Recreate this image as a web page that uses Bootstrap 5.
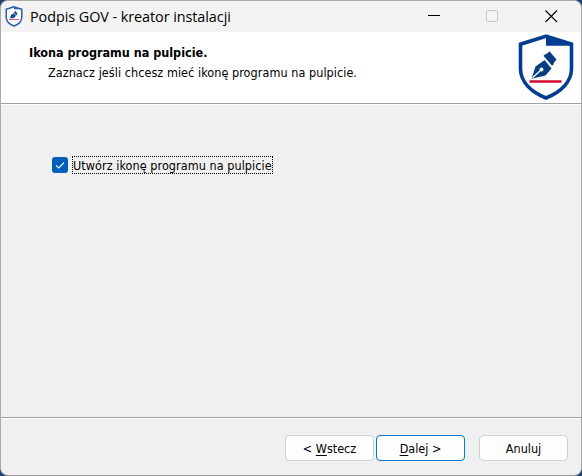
<!DOCTYPE html>
<html lang="pl">
<head>
<meta charset="utf-8">
<title>Podpis GOV - kreator instalacji</title>
<link href="https://cdn.jsdelivr.net/npm/bootstrap@5.3.0/dist/css/bootstrap.min.css" rel="stylesheet">
<style>
html, body { height: 100%; margin: 0; overflow: hidden; }
body { background: #1c3f78; font-family: "DejaVu Sans Condensed", "DejaVu Sans", sans-serif; font-stretch: condensed; font-size: 12.5px; line-height: 16px; color: #000; }
.wizard { width: 582px; height: 476px; background: #f0f0f0; border: 1px solid #aaa; border-bottom-color: #999; border-radius: 8px; overflow: hidden; }
.titlebar { height: 31px; background: #f3f3f3; padding-left: 4px; }
.titlebar-text { font-family: "Open Sans", "Noto Sans", sans-serif; font-stretch: normal; font-size: 14.4px; line-height: 20px; margin-left: 7px; letter-spacing: -.06px; }
.win-control { width: 58px; height: 31px; }
.wizard-head { height: 71px; background: #fff; padding: 13px 6px 0 28px; }
.wizard-title { font-weight: 700; }
.wizard-subtitle { padding-left: 19px; margin-top: 4px; letter-spacing: .06px; }
.emblem { margin-top: -12px; }
.rule { height: 2px; background: #a0a0a0; border-bottom: 1px solid #fff; }
.wizard-body { padding: 51px 0 0 51px; }
.option-box { width: 16px; height: 16px; border-radius: 3px; background: #005fb8; }
.option-text { border: 1px dotted #000; height: 18px; width: 201px; line-height: 17px; margin-left: 4px; white-space: nowrap; letter-spacing: .06px; }
.wizard-foot { height: 56px; padding: 16px 13px 0 0; }
.btn-wizard { width: 89px; height: 26px; padding: 0; font-size: 12.5px; line-height: 26px; border-radius: 4px; background: #fdfdfd; border: 1px solid #d0d0d0; color: #000; }
.btn-wizard.is-default { border-color: #0078d4; margin-left: 2px; }
.btn-wizard u { text-underline-offset: 2px; text-decoration-thickness: 1px; }
.cancel { margin-left: 14px; }
</style>
</head>
<body>
<svg class="d-none">
  <symbol id="shield" viewBox="0 0 58 68">
    <path d="M29 3.200 L3.500 11 V35 C3.500 48 14 58 29 64 C44 58 54.500 48 54.500 35 V11 Z" fill="#fff" stroke="#023d91" stroke-width="3.600"/>
    <path d="M29 2 L55 10 V12.500 H29 Z" fill="#023d91"/>
    <path d="M14.500 45 L18.500 33 L27.500 26.500 L34.500 35 L28.500 42 Z" fill="#083d82"/>
    <path d="M15.500 44 L23.500 37" stroke="#fff" stroke-width="1.300"/>
    <circle cx="24.500" cy="36" r="2" fill="#fff"/>
    <path d="M28 22 L32.500 18 L39.500 26 L35.500 31 Z" fill="#083d82"/>
    <path d="M27.500 21.500 L36 31.500" stroke="#083d82" stroke-width="2.600"/>
    <path d="M12.500 47.800 H44.500" stroke="#d20a2e" stroke-width="2.600"/>
  </symbol>
</svg>
<main class="wizard d-flex flex-column">
  <header class="titlebar d-flex align-items-center flex-shrink-0">
    <svg width="18" height="22" viewBox="0 0 18 22" fill="none">
      <path d="M9 .8 L1.200 3.300 V11 C1.200 15.500 4.500 18.500 9 20 C13.500 18.500 16.800 15.500 16.800 11 V3.300 Z" fill="#fafcff" stroke="#285fa8" stroke-width="1.500"/>
      <path d="M9 1 L16.500 3.300 H9 Z" fill="#285fa8"/>
      <path d="M5 12.500 L6 9 L8.500 7.200 L11 9.700 L9 11.900 Z" fill="#164985"/>
      <path d="M8.800 6.500 L10.500 5 L12.500 7.700 L11.200 9.500 Z" fill="#164985"/>
      <path d="M4 13.500 H14" stroke="#df6272"/>
    </svg>
    <span class="titlebar-text text-nowrap">Podpis GOV - kreator instalacji</span>
    <div class="d-flex ms-auto">
      <svg class="win-control" viewBox="0 0 58 31"><path d="M21 14.500 H33" stroke="#000"/></svg>
      <svg class="win-control" viewBox="0 0 58 31"><rect x="21.500" y="9.500" width="11" height="11" rx="1" fill="none" stroke="#c4c4c4"/></svg>
      <svg class="win-control" viewBox="0 0 58 31"><path d="M22.500 9.500 L34 21 M34 9.500 L22.500 21" stroke="#000" stroke-width="1.100"/></svg>
    </div>
  </header>
  <section class="wizard-head d-flex justify-content-between flex-shrink-0">
    <div class="text-nowrap">
      <div class="wizard-title">Ikona programu na pulpicie.</div>
      <div class="wizard-subtitle">Zaznacz jeśli chcesz mieć ikonę programu na pulpicie.</div>
    </div>
    <svg class="emblem flex-shrink-0" width="58" height="69" viewBox="0 0 58 68" preserveAspectRatio="none"><use href="#shield"/></svg>
  </section>
  <div class="rule flex-shrink-0"></div>
  <section class="wizard-body flex-grow-1">
    <label class="d-flex align-items-center">
      <span class="option-box d-flex"><svg width="16" height="16" fill="none"><path d="M4 8.300 L6.700 11 L12 5.700" stroke="#fff" stroke-width="1.100"/></svg></span>
      <span class="option-text">Utwórz ikonę programu na pulpicie</span>
    </label>
  </section>
  <div class="rule flex-shrink-0"></div>
  <footer class="wizard-foot d-flex justify-content-end flex-shrink-0">
    <button class="btn btn-wizard" type="button">&lt; <u>W</u>stecz</button>
    <button class="btn btn-wizard is-default" type="button"><u>D</u>alej &gt;</button>
    <button class="btn btn-wizard cancel" type="button">Anuluj</button>
  </footer>
</main>
<script src="https://cdn.jsdelivr.net/npm/bootstrap@5.3.0/dist/js/bootstrap.bundle.min.js"></script>
</body>
</html>
